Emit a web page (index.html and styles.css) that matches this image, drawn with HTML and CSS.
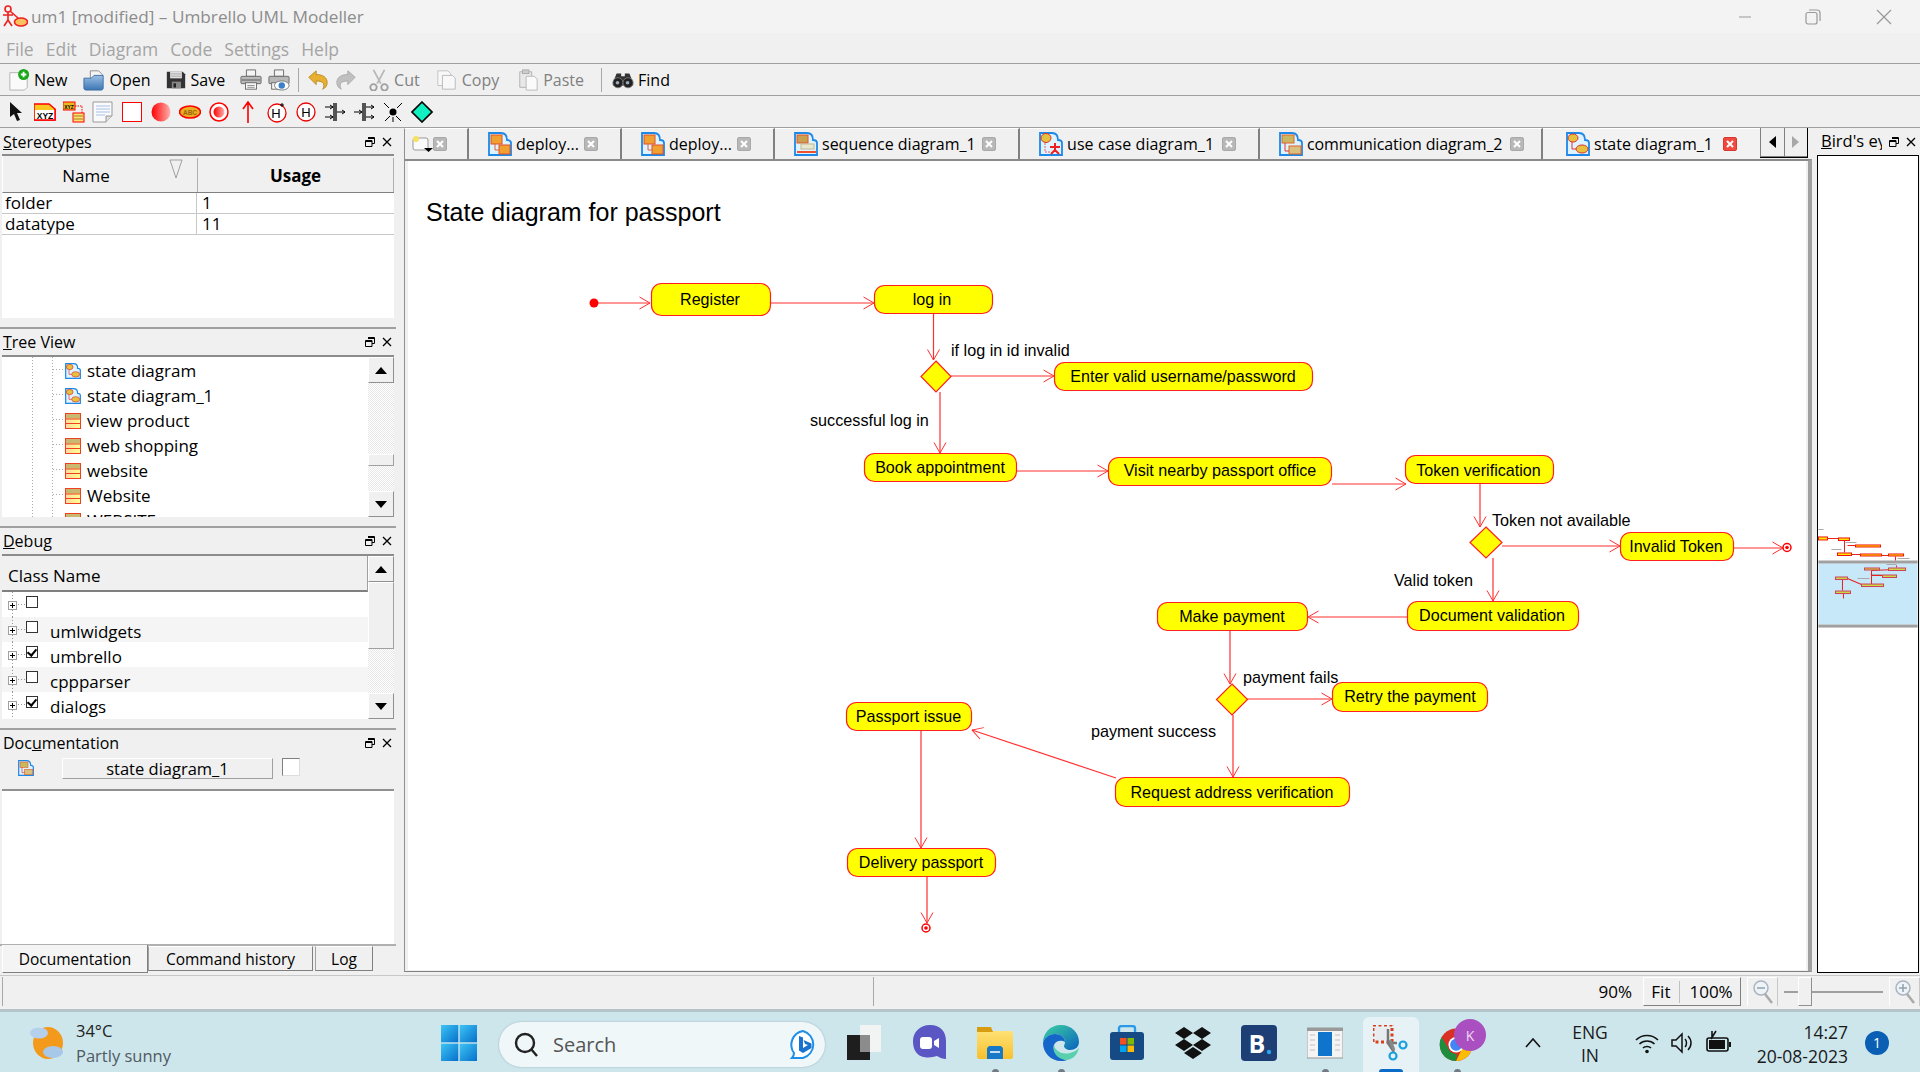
FILE: index.html
```html
<!DOCTYPE html>
<html lang="en">
<head>
<meta charset="utf-8">
<title>um1 [modified] – Umbrello UML Modeller</title>
<link rel="stylesheet" href="styles.css">
</head>
<body>
<svg class="defs" aria-hidden="true">
  <defs>
    <linearGradient id="gRed" x1="0" x2="1"><stop offset="0" stop-color="#f00"/><stop offset="1" stop-color="#ffb0b0"/></linearGradient>
    <linearGradient id="gBlue" x1="0" y1="0" x2="0" y2="1"><stop offset="0" stop-color="#9cc0e6"/><stop offset="1" stop-color="#3c76b4"/></linearGradient>
    <linearGradient id="gWin" x1="0" y1="0" x2="1" y2="1"><stop offset="0" stop-color="#3cc4f4"/><stop offset="1" stop-color="#0670cc"/></linearGradient>
    <linearGradient id="gFolder" x1="0" y1="0" x2="0" y2="1"><stop offset="0" stop-color="#ffe680"/><stop offset="1" stop-color="#f7c02c"/></linearGradient>
    <linearGradient id="gEdge" x1="0" y1="0" x2="1" y2="1"><stop offset="0" stop-color="#3cd2a0"/><stop offset="1" stop-color="#0a62c0"/></linearGradient>
    <linearGradient id="gClassFill" x1="0" x2="1"><stop offset="0" stop-color="#ffd8a0"/><stop offset="1" stop-color="#ffff90"/></linearGradient>
    <symbol id="doc" viewBox="0 0 24 24"><path d="M1 1h12c5 0 6 4 6 7 2 0 4 1 4 3v12H1z" fill="#dff2ff" stroke="#1c88e8" stroke-width="1.800"/></symbol>
    <symbol id="t-deploy" viewBox="0 0 24 24"><use href="#doc" width="24" height="24"/><rect x="3" y="3" width="11" height="9" fill="#f0a030" stroke="#e0502a"/><rect x="11" y="13" width="11" height="9" fill="#f0a030" stroke="#e0502a"/><path d="M7 12v6h4" fill="none" stroke="#e0603a"/></symbol>
    <symbol id="t-seq" viewBox="0 0 24 24"><use href="#doc" width="24" height="24"/><rect x="3" y="3" width="11" height="8" fill="#c9a050" stroke="#e0542a"/><rect x="7" y="12" width="13" height="5" fill="#e8e8d0" stroke="#c0b890"/><path d="M3 20h19" stroke="#f0502a" stroke-width="2"/></symbol>
    <symbol id="t-use" viewBox="0 0 24 24"><use href="#doc" width="24" height="24"/><ellipse cx="7" cy="6" rx="5" ry="4.500" fill="#e8c040" stroke="#d8342a"/><path d="M6 11v9h5" fill="none" stroke="#e86060" stroke-dasharray="2 1"/><path d="M16 11v9M11 15h10M16 18l-4 4M16 18l4 4" stroke="#f02020" stroke-width="2"/></symbol>
    <symbol id="t-comm" viewBox="0 0 24 24"><use href="#doc" width="24" height="24"/><rect x="3" y="3" width="12" height="8" fill="#c9b860" stroke="#e0642a"/><rect x="10" y="14" width="12" height="8" fill="#d8c080" stroke="#e0642a"/><path d="M6 11v8h4" fill="none" stroke="#e83030"/></symbol>
    <symbol id="t-state" viewBox="0 0 24 24"><use href="#doc" width="24" height="24"/><ellipse cx="7" cy="6" rx="5" ry="4" fill="#e8c040" stroke="#d8342a"/><ellipse cx="16" cy="17" rx="6" ry="4" fill="#e8c040" stroke="#d8342a"/><path d="M6 10v7h4" fill="none" stroke="#e83030"/></symbol>
    <symbol id="t-class" viewBox="0 0 16 16"><rect x=".5" y=".5" width="15" height="15" fill="url(#gClassFill)" stroke="#f04020"/><rect x="1" y="1" width="14" height="4.500" fill="#c8b870"/><path d="M1 6h14M1 10.500h14" stroke="#f04020"/></symbol>
    <symbol id="float" viewBox="0 0 10 10"><path d="M3 .5h6.500v6H7M.5 3.500H7v6H.5z" fill="none" stroke="#000"/><path d="M3 1.500h6.500M.5 4.500H7" stroke="#000"/></symbol>
    <symbol id="cross" viewBox="0 0 10 10"><path d="M1 1l8 8M9 1l-8 8" stroke="#000" stroke-width="1.300"/></symbol>
    <symbol id="tabx" viewBox="0 0 14 14"><rect x=".5" y=".5" width="13" height="13" rx="1.500" fill="#b8b8b8" stroke="#a8a8a8"/><path d="M4 4l6 6M10 4l-6 6" stroke="#fff" stroke-width="2"/></symbol>
    <symbol id="plus" viewBox="0 0 9 9"><rect x=".5" y=".5" width="8" height="8" fill="#fff" stroke="#a0a0a0"/><path d="M2 4.500h5M4.500 2v5" stroke="#000"/></symbol>
    <marker id="arr" viewBox="0 0 12 14" refX="11.500" refY="7" markerWidth="12" markerHeight="14" markerUnits="userSpaceOnUse" orient="auto"><path d="M1 1l10.500 6L1 13" fill="none" stroke="#ff3030"/></marker>
  </defs>
</svg>

<div class="app">
  <header class="titlebar">
    <svg class="appicon" viewBox="0 0 26 24"><circle cx="6" cy="4" r="3" fill="none" stroke="#ee2020" stroke-width="1.600"/><path d="M6 7v9M1 10h10M6 15l-4 6M6 15l4 6M8 6l8 7" stroke="#ee2020" stroke-width="1.600" fill="none"/><ellipse cx="19" cy="17" rx="6.500" ry="4" fill="#fbc060" stroke="#ee2020" stroke-width="1.600"/></svg>
    <span class="title-text">um1 [modified] – Umbrello UML Modeller</span>
    <span class="spacer"></span>
    <div class="winctl">
      <svg viewBox="0 0 12 16" class="wc wc-min"><path d="M0 8h12" stroke="#999"/></svg>
      <svg viewBox="0 0 16 16" class="wc wc-max"><rect x="1" y="3.500" width="11" height="11.500" rx="2" fill="none" stroke="#999" stroke-width="1.200"/><path d="M4 1h8c2 0 3 1 3 3v8" fill="none" stroke="#999" stroke-width="1.200"/></svg>
      <svg viewBox="0 0 16 16" class="wc wc-close"><path d="M1 1l14 14M15 1L1 15" stroke="#999" stroke-width="1.200"/></svg>
    </div>
  </header>

  <nav class="menubar">
    <span>File</span><span>Edit</span><span>Diagram</span><span>Code</span><span>Settings</span><span>Help</span>
  </nav>

  <div class="toolbar tb1">
    <div class="tbtn"><svg class="ti" viewBox="0 0 24 24"><path d="M2 4h14l5 5v11l-3 3H2z" fill="#fafafa" stroke="#b0b0b0"/><circle cx="17" cy="6" r="6" fill="#18a818"/><path d="M14 6h6M17 3v6" stroke="#fff" stroke-width="2"/></svg><span>New</span></div>
    <div class="tbtn"><svg class="ti" viewBox="0 0 24 24"><path d="M8 2h9l4 4v10H8z" fill="#f4f4f4" stroke="#888"/><path d="M1 10h8l3-3h10v14c0 1-1 2-2 2H3c-1 0-2-1-2-2z" fill="url(#gBlue)" stroke="#3a6ea0"/></svg><span>Open</span></div>
    <div class="tbtn"><svg class="ti ti-save" viewBox="0 0 24 24"><path d="M1 2h19l3 3v17H1z" fill="#333"/><rect x="5" y="2" width="14" height="8" fill="#e8e8e8"/><path d="M6 4h12M6 6h12M6 8h12" stroke="#aaa"/><rect x="7" y="14" width="11" height="8" fill="#888"/><rect x="9" y="16" width="3" height="5" fill="#222"/></svg><span>Save</span></div>
    <div class="tbtn tbtn-icon tbtn-first"><svg class="ti" viewBox="0 0 24 24"><path d="M7 1h10v7H7z" fill="#f4f4f4" stroke="#666"/><rect x="1" y="8" width="22" height="8" rx="1" fill="#b8b8b8" stroke="#666"/><rect x="6" y="15" width="12" height="7" fill="#f8f8f8" stroke="#666"/><path d="M8 18h8M8 20h8" stroke="#888"/><path d="M2 12h20" stroke="#555"/></svg></div>
    <div class="tbtn tbtn-icon"><svg class="ti" viewBox="0 0 24 24"><path d="M7 1h10v7H7z" fill="#f4f4f4" stroke="#666"/><rect x="1" y="8" width="22" height="8" rx="1" fill="#b8b8b8" stroke="#666"/><rect x="4" y="15" width="10" height="7" fill="#f8f8f8" stroke="#666"/><ellipse cx="15" cy="18" rx="8" ry="5" fill="#fff" stroke="#777"/><circle cx="15" cy="18" r="3.500" fill="#3a80c8"/></svg></div>
    <i class="tsep"></i>
    <div class="tbtn tbtn-icon"><svg class="ti" viewBox="0 0 24 24"><path d="M2 9l8-7v4c7 0 12 3 12 9 0 3-2 6-5 7 1-1 2-3 1-6-1-2-4-3-8-3v4z" fill="#e8b030" stroke="#b88a20"/></svg></div>
    <div class="tbtn tbtn-icon"><svg class="ti" viewBox="0 0 24 24"><path d="M22 9l-8-7v4C7 6 2 9 2 15c0 3 2 6 5 7-1-1-2-3-1-6 1-2 4-3 8-3v4z" fill="#c0c0c0" stroke="#a8a8a8"/></svg></div>
    <div class="tbtn off"><svg class="ti" viewBox="0 0 24 24"><path d="M6 1l8 15M18 1l-8 15" stroke="#b8b8b8" stroke-width="2"/><circle cx="6" cy="20" r="3.500" fill="none" stroke="#a0a0a0" stroke-width="2"/><circle cx="18" cy="20" r="3.500" fill="none" stroke="#a0a0a0" stroke-width="2"/></svg><span>Cut</span></div>
    <div class="tbtn off"><svg class="ti" viewBox="0 0 24 24"><path d="M2 2h11l3 3v13H2z" fill="#f8f8f8" stroke="#c0c0c0"/><path d="M7 7h11l3 3v12H7z" fill="#f8f8f8" stroke="#b8b8b8"/></svg><span>Copy</span></div>
    <div class="tbtn off tbtn-paste"><svg class="ti" viewBox="0 0 24 24"><path d="M3 3h13v17H3z" fill="#e8e8e8" stroke="#b0b0b0"/><rect x="6" y="1" width="7" height="4" fill="#ccc" stroke="#aaa"/><path d="M10 8h9l3 3v12H10z" fill="#fafafa" stroke="#b8b8b8"/></svg><span>Paste</span></div>
    <i class="tsep tsep2"></i>
    <div class="tbtn"><svg class="ti" viewBox="0 0 24 24"><path d="M5 5h5v3h4V5h5l4 10v3H1v-3z" fill="#333"/><circle cx="6.500" cy="15" r="5.500" fill="#222" stroke="#777"/><circle cx="17.500" cy="15" r="5.500" fill="#222" stroke="#777"/><circle cx="6" cy="15" r="2" fill="#9ab"/><circle cx="17" cy="15" r="2" fill="#9ab"/></svg><span>Find</span></div>
  </div>

  <div class="toolbar tb2">
    <div class="tool"><svg viewBox="0 0 22 22"><path d="M5 1v15l4-3 3 7 3-1-3-7h5z" fill="#111"/></svg></div>
    <div class="tool"><svg viewBox="0 0 22 22"><path d="M0 3h15l6 5v11H0z" fill="#f8c820" stroke="#f00" stroke-width="1.500"/><rect x="1" y="9" width="20" height="10" fill="#fff"/><text x="11" y="17.500" class="mini-bold">XYZ</text><path d="M0 19h21V8" fill="none" stroke="#f00" stroke-width="1.500"/></svg></div>
    <div class="tool"><svg viewBox="0 0 22 22"><rect x="0" y="1" width="12" height="8" fill="#e8b820" stroke="#f00"/><text x="6" y="7.500" class="mini-bold mini-xs">XYZ</text><rect x="10" y="12" width="11" height="9" fill="#ffe070" stroke="#f00"/><path d="M12 5h7v7" fill="none" stroke="#f00" stroke-dasharray="1.500 1"/><path d="M11 15h9M11 18h9" stroke="#a08020"/></svg></div>
    <div class="tool"><svg viewBox="0 0 22 22"><path d="M1 1h19v14l-6 6H1z" fill="#fafafa" stroke="#999"/><path d="M4 5h14M4 8h14M4 11h14M4 14h9" stroke="#a8c0e8"/><path d="M14 21v-6h6" fill="#ddd" stroke="#999"/></svg></div>
    <div class="tool"><svg viewBox="0 0 22 22"><rect x="1.500" y="1.500" width="19" height="19" fill="#fff" stroke="#f00" stroke-width="1"/></svg></div>
    <div class="tool"><svg viewBox="0 0 22 22"><circle cx="11" cy="11" r="9.500" fill="url(#gRed)"/></svg></div>
    <div class="tool"><svg viewBox="0 0 22 22"><ellipse cx="11" cy="11" rx="10.500" ry="6" fill="#e8b020" stroke="#f00" stroke-width="1.500"/><text x="11" y="13.500" class="mini-abc">ABC</text></svg></div>
    <div class="tool"><svg viewBox="0 0 22 22"><circle cx="11" cy="11" r="9" fill="#fff" stroke="#f00" stroke-width="1.500"/><circle cx="11" cy="11" r="5.500" fill="url(#gRed)"/></svg></div>
    <div class="tool"><svg viewBox="0 0 22 22"><path d="M11 22V1M6 8l5-7 5 7" fill="none" stroke="#f00" stroke-width="1.600"/></svg></div>
    <div class="tool"><svg viewBox="0 0 22 22"><circle cx="11" cy="12" r="9" fill="#fff" stroke="#e00" stroke-width="1.300"/><text x="10" y="16.500" class="mini-h">H</text><path d="M16 2v4M14 4h4" stroke="#000"/></svg></div>
    <div class="tool"><svg viewBox="0 0 22 22"><circle cx="11" cy="11" r="9" fill="#fff" stroke="#e00" stroke-width="1.300"/><text x="11" y="15.500" class="mini-h">H</text></svg></div>
    <div class="tool"><svg viewBox="0 0 22 22"><path d="M10 2v18M12 2v18" stroke="#000" stroke-width="1.300"/><path d="M1 6h8M6 4l3 2-3 2M1 16h8M6 14l3 2-3 2M13 11h8M18 9l3 2-3 2" fill="none" stroke="#000"/></svg></div>
    <div class="tool"><svg viewBox="0 0 22 22"><path d="M10 2v18M12 2v18" stroke="#000" stroke-width="1.300"/><path d="M1 11h8M6 9l3 2-3 2M13 6h8M18 4l3 2-3 2M13 16h8M18 14l3 2-3 2" fill="none" stroke="#000"/></svg></div>
    <div class="tool"><svg viewBox="0 0 22 22"><circle cx="11" cy="11" r="3.500" fill="#000"/><path d="M2 2l5 5M20 2l-5 5M3 20l5-5M19 20l-5-5M11 16v5" stroke="#000"/></svg></div>
    <div class="tool"><svg viewBox="0 0 22 22"><path d="M11 1l10 10-10 10L1 11z" fill="#10f0c0" stroke="#000" stroke-width="1.600"/></svg></div>
  </div>

  <main class="workspace">
    <aside class="left">
      <section class="dock dock-stereo">
        <div class="dock-head"><span><u>S</u>tereotypes</span><span class="dock-btns"><svg><use href="#float"/></svg><svg><use href="#cross"/></svg></span></div>
        <div class="stereo-body">
          <div class="thead">
            <div class="th th-name">Name<svg class="sort" viewBox="0 0 14 20"><path d="M1 1h12L7 19z" fill="none" stroke="#a0a0a0"/></svg></div>
            <div class="th th-usage">Usage</div>
          </div>
          <div class="trow"><span class="c1">folder</span><span class="c2">1</span></div>
          <div class="trow"><span class="c1">datatype</span><span class="c2">11</span></div>
        </div>
      </section>

      <section class="dock dock-tree">
        <div class="dock-head"><span><u>T</u>ree View</span><span class="dock-btns"><svg><use href="#float"/></svg><svg><use href="#cross"/></svg></span></div>
        <div class="tree-body">
          <div class="tree-list">
            <div class="tree-row"><svg class="ticon"><use href="#t-state"/></svg><span>state diagram</span></div>
            <div class="tree-row"><svg class="ticon"><use href="#t-state"/></svg><span>state diagram_1</span></div>
            <div class="tree-row"><svg class="ticon"><use href="#t-class"/></svg><span>view product</span></div>
            <div class="tree-row"><svg class="ticon"><use href="#t-class"/></svg><span>web shopping</span></div>
            <div class="tree-row"><svg class="ticon"><use href="#t-class"/></svg><span>website</span></div>
            <div class="tree-row"><svg class="ticon"><use href="#t-class"/></svg><span>Website</span></div>
            <div class="tree-row"><svg class="ticon"><use href="#t-class"/></svg><span>WEBSITE</span></div>
          </div>
          <div class="scroll">
            <div class="sbtn"><i class="tri-up"></i></div>
            <div class="strack st-a"></div>
            <div class="sthumb st-t1"></div>
            <div class="strack st-b"></div>
            <div class="sbtn"><i class="tri-down"></i></div>
          </div>
        </div>
      </section>

      <section class="dock dock-debug">
        <div class="dock-head"><span><u>D</u>ebug</span><span class="dock-btns"><svg><use href="#float"/></svg><svg><use href="#cross"/></svg></span></div>
        <div class="debug-body">
          <div class="debug-main">
            <div class="debug-th">Class Name</div>
            <div class="debug-rows">
              <div class="drow"><svg class="dplus"><use href="#plus"/></svg><i class="cb"></i><span></span></div>
              <div class="drow alt"><svg class="dplus"><use href="#plus"/></svg><i class="cb"></i><span>umlwidgets</span></div>
              <div class="drow"><svg class="dplus"><use href="#plus"/></svg><i class="cb on"></i><span>umbrello</span></div>
              <div class="drow alt"><svg class="dplus"><use href="#plus"/></svg><i class="cb"></i><span>cppparser</span></div>
              <div class="drow"><svg class="dplus"><use href="#plus"/></svg><i class="cb on"></i><span>dialogs</span></div>
            </div>
          </div>
          <div class="scroll">
            <div class="sbtn"><i class="tri-up"></i></div>
            <div class="sthumb st-t2"></div>
            <div class="strack st-c"></div>
            <div class="sbtn"><i class="tri-down"></i></div>
          </div>
        </div>
      </section>

      <section class="dock dock-doc">
        <div class="dock-head"><span>Doc<u>u</u>mentation</span><span class="dock-btns"><svg><use href="#float"/></svg><svg><use href="#cross"/></svg></span></div>
        <div class="doc-bar">
          <svg class="doc-ico"><use href="#t-comm"/></svg>
          <div class="doc-label">state diagram_1</div>
          <i class="doc-check"></i>
        </div>
        <div class="doc-text"></div>
        <div class="doc-tabs">
          <div class="dtab active">Documentation</div>
          <div class="dtab dtab-cmd">Command history</div>
          <div class="dtab dtab-log">Log</div>
        </div>
      </section>
    </aside>

    <section class="center">
      <div class="tabs">
        <div class="tab tab0"><svg class="corner" viewBox="0 0 22 18"><rect x="1" y="3" width="15" height="12" rx="2" fill="#fafafa" stroke="#999"/><circle cx="4" cy="4" r="3" fill="#f8e060"/><path d="M12 13h9l-4.500 4z" fill="#000"/></svg><svg class="tabx tabx0"><use href="#tabx"/></svg></div>
        <div class="tab w1"><svg class="tico"><use href="#t-deploy"/></svg><span>deploy...</span><svg class="tabx"><use href="#tabx"/></svg></div>
        <div class="tab w1"><svg class="tico"><use href="#t-deploy"/></svg><span>deploy...</span><svg class="tabx"><use href="#tabx"/></svg></div>
        <div class="tab w2"><svg class="tico"><use href="#t-seq"/></svg><span>sequence diagram_1</span><svg class="tabx"><use href="#tabx"/></svg></div>
        <div class="tab w3"><svg class="tico"><use href="#t-use"/></svg><span class="tight-up">use case diagram_1</span><svg class="tabx"><use href="#tabx"/></svg></div>
        <div class="tab w4"><svg class="tico"><use href="#t-comm"/></svg><span class="tight">communication diagram_2</span><svg class="tabx"><use href="#tabx"/></svg></div>
        <div class="tab w5 cur"><svg class="tico"><use href="#t-state"/></svg><span>state diagram_1</span>
          <svg class="tabx" viewBox="0 0 14 14"><rect x=".5" y=".5" width="13" height="13" rx="1.500" fill="#f04a40" stroke="#d83830"/><path d="M4 4l6 6M10 4l-6 6" stroke="#fff" stroke-width="2"/></svg></div>
        <div class="tabnav"><div class="navb"><i class="tri-left"></i></div><div class="navb"><i class="tri-right"></i></div></div>
      </div>
      <div class="canvas-frame">
        <svg class="diagram" viewBox="408 161 1398 809">
          <text x="426" y="221" class="d-title">State diagram for passport</text>

          <g class="edges">
            <path d="M594 303H650" marker-end="url(#arr)"/>
            <path d="M771 303H874" marker-end="url(#arr)"/>
            <path d="M933.500 314V360" marker-end="url(#arr)"/>
            <path d="M951 376H1054" marker-end="url(#arr)"/>
            <path d="M940 392V453" marker-end="url(#arr)"/>
            <path d="M1017 471H1108" marker-end="url(#arr)"/>
            <path d="M1332 484H1406" marker-end="url(#arr)"/>
            <path d="M1480 484V527" marker-end="url(#arr)"/>
            <path d="M1502 546H1620" marker-end="url(#arr)"/>
            <path d="M1734 548H1783" marker-end="url(#arr)"/>
            <path d="M1493 558V601" marker-end="url(#arr)"/>
            <path d="M1407 617H1308" marker-end="url(#arr)"/>
            <path d="M1230 631V684" marker-end="url(#arr)"/>
            <path d="M1247 699H1332" marker-end="url(#arr)"/>
            <path d="M1233 715V777" marker-end="url(#arr)"/>
            <path d="M1116 778L972 730" marker-end="url(#arr)"/>
            <path d="M921 731V848" marker-end="url(#arr)"/>
            <path d="M927 877V923" marker-end="url(#arr)"/>
          </g>

          <circle cx="594" cy="303" r="4.500" fill="#f00"/>

          <g class="nodes">
            <rect x="651.500" y="283.500" width="119" height="32" rx="10"/>
            <rect x="874.500" y="285.500" width="118" height="28" rx="10"/>
            <rect x="1054.500" y="362.500" width="258" height="28" rx="10"/>
            <rect x="864.500" y="453.500" width="152" height="28" rx="10"/>
            <rect x="1108.500" y="457.500" width="223" height="28" rx="10"/>
            <rect x="1405.500" y="455.500" width="148" height="28" rx="10"/>
            <rect x="1620.500" y="532.500" width="113" height="28" rx="10"/>
            <rect x="1407.500" y="601.500" width="171" height="29" rx="10"/>
            <rect x="1157.500" y="602.500" width="150" height="28" rx="10"/>
            <rect x="1332.500" y="682.500" width="155" height="29" rx="10"/>
            <rect x="846.500" y="702.500" width="125" height="28" rx="10"/>
            <rect x="1115.500" y="777.500" width="234" height="29" rx="10"/>
            <rect x="847.500" y="848.500" width="148" height="28" rx="10"/>
            <path d="M936 361L951 376.500 936 392 921 376.500z"/>
            <path d="M1486 527L1502 542.500 1486 558 1470 542.500z"/>
            <path d="M1232 684L1247.500 699.500 1232 715 1216.500 699.500z"/>
          </g>

          <g class="ends">
            <circle cx="1787" cy="547.500" r="4"/><circle cx="926" cy="928" r="4"/>
          </g>
          <circle cx="1787" cy="547.500" r="1.800" fill="#f00"/><circle cx="926" cy="928" r="1.800" fill="#f00"/>

          <g class="d-node-text">
            <text x="710" y="305">Register</text>
            <text x="932" y="305">log in</text>
            <text x="1183" y="381.500">Enter valid username/password</text>
            <text x="940" y="473">Book appointment</text>
            <text x="1220" y="476">Visit nearby passport office</text>
            <text x="1478.500" y="476">Token verification</text>
            <text x="1676" y="552">Invalid Token</text>
            <text x="1492" y="620.500">Document validation</text>
            <text x="1232" y="622">Make payment</text>
            <text x="1410" y="702">Retry the payment</text>
            <text x="908.500" y="721.500">Passport issue</text>
            <text x="1232" y="798">Request address verification</text>
            <text x="921" y="868">Delivery passport</text>
          </g>
          <g class="d-label">
            <text x="951" y="355.500">if log in id invalid</text>
            <text x="810" y="425.500">successful log in</text>
            <text x="1492" y="525.500">Token not available</text>
            <text x="1394" y="585.500">Valid token</text>
            <text x="1243" y="683">payment fails</text>
            <text x="1091" y="737">payment success</text>
          </g>
        </svg>
      </div>
    </section>

    <aside class="bird">
      <div class="dock-head bird-head"><span class="bird-title"><u>B</u>ird's eye view</span><span class="dock-btns"><svg><use href="#float"/></svg><svg><use href="#cross"/></svg></span></div>
      <div class="bird-body">
        <svg class="bird-map" viewBox="1819 156 99 815">
          <rect x="1819" y="563" width="99" height="61" fill="#c6e8f8"/>
          <rect x="1819" y="560" width="99" height="3" fill="#a0a0a0"/>
          <rect x="1819" y="624" width="99" height="3" fill="#a0a0a0"/>
          <path class="mini-t" d="M1819 529h5M1846 542h11M1832 549h10M1898 558h12M1887 564h10M1871 574h11M1858 578h12"/>
          <g class="mini">
            <path d="M1828 538H1839M1845 540V552M1848 545H1856M1852 554H1861M1882 555H1889M1896 556V560"/>
            <path d="M1872 570L1896 569M1872 570V584M1843 579V590M1848 578L1862 584M1872 575H1883M1897 565L1897 567M1844 593V598"/>
          </g>
          <g class="mini-n">
            <rect x="1819" y="536.500" width="9" height="3"/><rect x="1839" y="537.500" width="11" height="2.500"/><rect x="1856" y="544.500" width="25" height="2"/><rect x="1838" y="552.500" width="14" height="2.500"/><rect x="1861" y="553.500" width="21" height="2"/><rect x="1889" y="553.500" width="15" height="2"/>
          </g>
          <g class="mini-m">
            <rect x="1865" y="567.500" width="15" height="2"/><rect x="1889" y="567.500" width="17" height="2.500"/><rect x="1883" y="574.500" width="14" height="2.500"/><rect x="1836" y="576.500" width="12" height="2.500"/><rect x="1862" y="583.500" width="22" height="2.500"/><rect x="1836" y="590.500" width="15" height="2.500"/>
          </g>
        </svg>
      </div>
    </aside>
  </main>

  <footer class="status">
    <div class="status-left"></div>
    <div class="status-right">
      <span class="zoomval">90%</span>
      <div class="zoomgroup"><span>Fit</span><i></i><span>100%</span></div>
      <div class="zbtn"><svg viewBox="0 0 22 26"><circle cx="9" cy="9" r="7" fill="#eef3f8" stroke="#a8b4c0" stroke-width="1.500"/><path d="M5 9h8" stroke="#90a0b0" stroke-width="1.500"/><path d="M13 15l7 9" stroke="#aaa" stroke-width="2.500"/></svg></div>
      <div class="zslider"><i class="zline"></i><i class="zthumb"></i></div>
      <div class="zbtn"><svg viewBox="0 0 22 26"><circle cx="9" cy="9" r="7" fill="#eef3f8" stroke="#a8b4c0" stroke-width="1.500"/><path d="M5 9h8M9 5v8" stroke="#90a0b0" stroke-width="1.500"/><path d="M13 15l7 9" stroke="#aaa" stroke-width="2.500"/></svg></div>
    </div>
  </footer>

  <footer class="taskbar">
    <div class="weather">
      <svg class="weather-ico" viewBox="0 0 36 34"><ellipse cx="19" cy="17" rx="15" ry="16" fill="#f39a1c"/><ellipse cx="10" cy="7" rx="9" ry="5.500" fill="#b4d0ec"/><ellipse cx="24" cy="26" rx="10" ry="6" fill="#a8c8ea"/></svg>
      <div class="weather-text"><div class="wt1">34°C</div><div class="wt2">Partly sunny</div></div>
    </div>
    <div class="slot"><svg class="ico" viewBox="0 0 36 36"><rect x="0" y="0" width="17.300" height="17.300" fill="url(#gWin)"/><rect x="18.700" y="0" width="17.300" height="17.300" fill="url(#gWin)"/><rect x="0" y="18.700" width="17.300" height="17.300" fill="url(#gWin)"/><rect x="18.700" y="18.700" width="17.300" height="17.300" fill="url(#gWin)"/></svg></div>
    <div class="search">
      <svg class="s-ico" viewBox="0 0 24 26"><circle cx="11" cy="11" r="9" fill="none" stroke="#222" stroke-width="2.400"/><path d="M17 17l6 7" stroke="#222" stroke-width="2.400"/></svg>
      <span class="s-text">Search</span>
      <svg class="s-bing" viewBox="0 0 32 32"><path d="M16 2a14 14 0 0 1 0 27H5c0 0 2-2 2-5A14 14 0 0 1 16 2z" fill="#fff" stroke="#1d8fe8" stroke-width="2"/><path d="M12 7l4 1.500V19l5-3-3-1-1.500-4 8 3.500V19l-8.500 5-4-2.500z" fill="#1872d0"/></svg>
    </div>
    <div class="slot"><svg class="ico" viewBox="0 0 36 36"><rect x="15" y="0" width="21" height="27" fill="#f2f4f4"/><rect x="2" y="10" width="23" height="25" fill="#1e1e1e"/><rect x="15" y="10" width="10" height="17" fill="#8c8c8c"/></svg></div>
    <div class="slot"><svg class="ico" viewBox="0 0 36 36"><path d="M18 0c11 0 16 7 16 16v18c-3 0-6-1-9-3-9 3-24 3-24-15C1 7 8 0 18 0z" transform="translate(1 0)" fill="#5a56c4"/><rect x="9" y="12" width="12" height="12" rx="3" fill="#fff"/><path d="M23 16l5-3v10l-5-3z" fill="#fff"/></svg></div>
    <div class="slot dot"><svg class="ico" viewBox="0 0 36 32"><path d="M0 2c0-1 1-2 2-2h10l4 4h18c1 0 2 1 2 2v24c0 1-1 2-2 2H2c-1 0-2-1-2-2z" fill="url(#gFolder)"/><path d="M0 0h14l2 5H0z" fill="#d89c10"/><path d="M10 22c0-1 1-3 3-3h10c2 0 3 2 3 3v10H10z" fill="#1878c8"/><path d="M13 25h10" stroke="#fff" stroke-width="1.500"/></svg></div>
    <div class="slot dot"><svg class="ico" viewBox="0 0 36 36"><path d="M18 0c11 0 18 8 18 17 0 5-4 8-9 8-3 0-6-2-6-4 0-1 1-2 1-4 0-5-5-8-10-8C6 9 1 13 0 18 0 8 7 0 18 0z" fill="url(#gEdge)"/><path d="M0 18c1-5 6-9 12-9 5 0 10 3 10 8-3-2-9-2-11 3-2 6 3 14 13 15-2 1-4 1-6 1C8 36 0 28 0 18z" fill="#1466c8"/><path d="M36 22c-1 8-7 13-13 13-9-1-14-9-12-15 1 6 8 10 16 8 4-1 8-3 9-6z" fill="#58d0ae"/></svg></div>
    <div class="slot"><svg class="ico" viewBox="0 0 36 36"><path d="M10 8V3c0-1 1-2 3-2h10c2 0 3 1 3 2v5" fill="none" stroke="#2a9ae8" stroke-width="2.400"/><rect x="1" y="7" width="34" height="28" rx="3" fill="#154a84"/><rect x="11" y="13" width="6.500" height="6.500" fill="#f25022"/><rect x="18.500" y="13" width="6.500" height="6.500" fill="#7fba00"/><rect x="11" y="20.500" width="6.500" height="6.500" fill="#00a4ef"/><rect x="18.500" y="20.500" width="6.500" height="6.500" fill="#ffb900"/></svg></div>
    <div class="slot"><svg class="ico" viewBox="0 0 36 32"><path d="M9 0l9 6-9 6-9-6zM27 0l9 6-9 6-9-6zM9 12l9 6-9 6-9-6zM27 12l9 6-9 6-9-6zM18 20l9 6-9 6-9-6z" fill="#111"/></svg></div>
    <div class="slot"><svg class="ico" viewBox="0 0 36 36"><rect x="0" y="0" width="36" height="36" rx="4" fill="#1d3f75"/><text x="16" y="28" class="booking">B</text><circle cx="28" cy="27" r="2.200" fill="#27a6e8"/></svg></div>
    <div class="slot dot"><svg class="ico" viewBox="0 0 36 30"><rect x="0" y="0" width="36" height="30" fill="#f4f4f4" stroke="#999"/><rect x="0" y="0" width="36" height="3" fill="#999"/><rect x="11" y="4" width="14" height="24" fill="#0f74cc"/><path d="M3 7h5M3 12h5M3 17h5M3 22h5M28 7h5M28 12h5M28 17h5M28 22h5" stroke="#c0c0c0"/></svg></div>
    <div class="slot active"><svg class="ico" viewBox="0 0 36 36"><rect x="0" y="0" width="19" height="17" fill="none" stroke="#d8401c" stroke-width="3" stroke-dasharray="3 2.500"/><rect x="3" y="3" width="13" height="12" fill="#e8ecef"/><path d="M15 4v14l6 9M24 18l-9 0" stroke="#777" stroke-width="2.500" fill="none"/><path d="M17 15l4 10" stroke="#888" stroke-width="3"/><circle cx="30" cy="20" r="3.500" fill="none" stroke="#1aa0e0" stroke-width="2.200"/><circle cx="20" cy="31" r="3.500" fill="none" stroke="#1aa0e0" stroke-width="2.200"/></svg></div>
    <div class="slot dot chrome">
      <svg class="ico" viewBox="0 0 40 42"><circle cx="19" cy="23" r="19" fill="#d93025"/><path d="M19 42A19 19 0 0 1 2 14l10 17c3 2 6 3 8 3z" fill="#1e8e3e"/><path d="M19 42c10 0 19-8 19-19 0-3-1-6-2-8H19l9 8z" fill="#fbbc04"/><circle cx="19" cy="23" r="9" fill="#fff"/><circle cx="19" cy="23" r="7" fill="#4285f4"/></svg>
      <span class="kbadge">K</span>
    </div>
    <div class="tray">
      <svg class="caret" viewBox="0 0 16 10"><path d="M1 9l7-8 7 8" fill="none" stroke="#111" stroke-width="1.600"/></svg>
      <div class="lang"><div>ENG</div><div>IN</div></div>
      <svg class="tr-wifi" viewBox="0 0 24 24"><path d="M1 9c6-6 16-6 22 0M4.500 13c4-4 11-4 15 0M8 17c2-2 6-2 8 0" fill="none" stroke="#111" stroke-width="1.600"/><circle cx="12" cy="20.500" r="1.800" fill="#111"/></svg>
      <svg class="tr-vol" viewBox="0 0 24 24"><path d="M2 9h4l6-6v18l-6-6H2z" fill="none" stroke="#111" stroke-width="1.500"/><path d="M15 8c2 2 2 6 0 8M18 5c4 4 4 10 0 14" fill="none" stroke="#111" stroke-width="1.500"/></svg>
      <svg class="tr-bat" viewBox="0 0 26 26"><rect x="1" y="8" width="21" height="13" rx="2" fill="none" stroke="#111" stroke-width="1.600"/><rect x="3" y="10" width="16" height="9" fill="#111"/><rect x="23" y="12" width="2" height="5" fill="#111"/><path d="M6 1v7M10 1L5 9" stroke="#111" stroke-width="1.600"/></svg>
      <div class="clock"><div>14:27</div><div>20-08-2023</div></div>
      <span class="notif">1</span>
    </div>
  </footer>
</div>
</body>
</html>
```
FILE: styles.css
```css
* { box-sizing: border-box; }
html, body { margin: 0; padding: 0; }
body { width: 1920px; height: 1072px; overflow: hidden; background: #f0f0f0; font-family: "Open Sans", "Noto Sans", sans-serif; color: #000; }
.defs { display: block; width: 0; height: 0; }
i { display: block; font-style: normal; }
.app { display: flex; flex-direction: column; width: 1920px; height: 1072px; }

/* title bar */
.titlebar { flex: 0 0 33px; display: flex; align-items: center; background: #f3f3f3; padding-left: 2px; }
.appicon { width: 26px; height: 24px; margin-right: 3px; }
.title-text { font-size: 17.200px; color: #8c8c8c; }
.spacer { flex: 1; }
.winctl { display: flex; align-items: center; }
.wc { height: 16px; display: block; }
.wc-min { width: 12px; margin-right: 54px; }
.wc-max { width: 16px; margin-right: 55px; }
.wc-close { width: 16px; margin-right: 28px; }

/* menu */
.menubar { flex: 0 0 31px; display: flex; align-items: center; gap: 12px; padding: 2px 6px 0; border-bottom: 1px solid #a0a0a0; font-size: 17.500px; color: #a4a4a4; background: #f0f0f0; }

/* toolbars */
.toolbar { flex: 0 0 32px; display: flex; align-items: center; border-bottom: 1px solid #a0a0a0; background: #f0f0f0; }
.tb1 { font-size: 16px; }
.tbtn { display: flex; align-items: center; gap: 4px; padding: 0 8px; }
.tbtn span { white-space: nowrap; }
.tbtn-icon { padding: 0 3px; }
.tbtn-first { margin-left: 4px; }
.tbtn-paste { margin-left: 2px; }
.ti { width: 22px; height: 22px; display: block; }
.ti-save { width: 20px; }
.off { color: #808080; }
.tsep { width: 1px; height: 24px; background: #a8a8a8; margin: 0 5px; }
.tsep2 { margin: 0 2px 0 9px; }
.tb2 { padding-left: 1px; }
.tool { width: 29px; height: 30px; display: flex; align-items: center; justify-content: center; }
.tool svg { width: 22px; height: 22px; display: block; }
.mini-bold { font: 700 8.500px "Liberation Sans", sans-serif; text-anchor: middle; fill: #000; }
.mini-xs { font-size: 5px; }
.mini-abc { font: 700 6.500px "Liberation Sans", sans-serif; text-anchor: middle; fill: #a06010; }
.mini-h { font: 400 13px "Liberation Sans", sans-serif; text-anchor: middle; fill: #000; }

/* workspace */
.workspace { flex: 0 0 847px; display: flex; min-height: 0; }
.left { flex: 0 0 396px; display: flex; flex-direction: column; }
.dock { display: flex; flex-direction: column; overflow: hidden; }
.dock-stereo { flex: 0 0 199px; }
.dock-tree { flex: 0 0 199px; border-top: 2px solid #a0a0a0; }
.dock-debug { flex: 0 0 202px; border-top: 2px solid #a0a0a0; }
.dock-doc { flex: 1; border-top: 2px solid #a0a0a0; }
.dock-head { flex: 0 0 26px; display: flex; align-items: center; justify-content: space-between; padding: 0 2px 1px 3px; font-size: 16px; line-height: 1; white-space: nowrap; }
.dock-stereo .dock-head { padding: 1px 2px 0 3px; }
.dock-btns { display: flex; gap: 7px; align-items: center; padding-right: 2px; }
.dock-btns svg { width: 10px; height: 10px; display: block; }

.stereo-body { flex: 1; margin: 0 2px 9px; background: #fff; border-top: 2px solid #8c8c8c; }
.thead { display: flex; height: 37px; padding-top: 2px; background: #f0f0f0; border-bottom: 1px solid #808080; border-left: 1px solid #fff; }
.th { position: relative; display: flex; align-items: center; justify-content: center; font-size: 17px; border-right: 1px solid #b0b0b0; }
.th-name { width: 195px; padding-right: 28px; }
.th-usage { flex: 1; font-weight: 700; }
.sort { position: absolute; left: 166px; top: 1px; width: 14px; height: 20px; }
.trow { display: flex; height: 21px; font-size: 17px; line-height: 20px; border-bottom: 1px solid #c8c8c8; }
.c1 { width: 195px; padding-left: 3px; border-right: 1px solid #c8c8c8; }
.c2 { padding-left: 5px; }

.tree-body { flex: 1; display: flex; margin: 0 2px 9px; border-top: 2px solid #8c8c8c; background: #fff; min-height: 0; }
.tree-list { flex: 1; padding-top: 1px; overflow: hidden; background-color: #fff; background-image: repeating-linear-gradient(#aaa 0 1px, transparent 1px 3px), repeating-linear-gradient(#aaa 0 1px, transparent 1px 3px); background-size: 1px 100%, 1px 100%; background-position: 30px 0, 50px 0; background-repeat: no-repeat; }
.tree-row { display: flex; align-items: center; height: 25px; padding-left: 63px; font-size: 17px; white-space: nowrap; background-image: repeating-linear-gradient(90deg, #aaa 0 1px, transparent 1px 3px); background-size: 10px 1px; background-position: 51px 11px; background-repeat: no-repeat; }
.ticon { width: 16px; height: 16px; margin-right: 6px; flex: none; }
.scroll { flex: 0 0 26px; display: flex; flex-direction: column; background: #f0f0f0; }
.sbtn { flex: 0 0 26px; display: flex; align-items: center; justify-content: center; background: #f0f0f0; border: 1px solid; border-color: #fff #909090 #909090 #fff; }
.strack { background-color: #f6f6f6; background-image: repeating-conic-gradient(#e8e8e8 0 25%, #fff 0 50%); background-size: 2px 2px; }
.st-a { flex: 0 0 71px; }
.sthumb { background: #f0f0f0; border: 1px solid; border-color: #fff #a0a0a0 #a0a0a0 #fff; }
.st-t1 { flex: 0 0 12px; }
.st-b { flex: 1; }
.st-t2 { flex: 0 0 67px; }
.st-c { flex: 1; }
.tri-up { width: 0; height: 0; border: 6.500px solid transparent; border-top: 0; border-bottom: 7px solid #000; }
.tri-down { width: 0; height: 0; border: 6.500px solid transparent; border-bottom: 0; border-top: 7px solid #000; }
.tri-left { width: 0; height: 0; border: 6.500px solid transparent; border-left: 0; border-right: 7px solid #000; }
.tri-right { width: 0; height: 0; border: 6.500px solid transparent; border-right: 0; border-left: 7px solid #a8a8a8; }

.debug-body { flex: 1; display: flex; margin: 0 2px 9px; border-top: 2px solid #8c8c8c; min-height: 0; }
.debug-main { flex: 1; display: flex; flex-direction: column; min-width: 0; }
.debug-th { flex: 0 0 36px; display: flex; align-items: center; padding: 5px 0 0 6px; font-size: 17px; border-bottom: 2px solid #808080; border-right: 1px solid #a0a0a0; }
.debug-rows { flex: 1; background-color: #fff; }
.drow { position: relative; height: 25px; display: flex; align-items: flex-start; font-size: 17px; background-color: #fff; background-image: repeating-linear-gradient(#999 0 1px, transparent 1px 3px), repeating-linear-gradient(90deg, #999 0 1px, transparent 1px 3px); background-size: 1px 100%, 8px 1px; background-position: 10px 0, 16px 12px; background-repeat: no-repeat; }
.drow.alt { background-color: #f5f5f5; }
.dplus { width: 9px; height: 9px; margin: 9px 0 0 6px; flex: none; }
.cb { width: 12px; height: 12px; margin: 4px 0 0 9px; border: 1px solid #333; background: #fff; flex: none; position: relative; }
.cb.on::after { content: ""; position: absolute; left: 2px; top: 0; width: 4px; height: 7px; border: solid #000; border-width: 0 2px 2px 0; transform: rotate(40deg); }
.drow span { margin-left: 12px; line-height: 25px; margin-top: 2px; }

.doc-bar { flex: 0 0 35px; display: flex; align-items: flex-start; padding-top: 2px; border-bottom: 2px solid #909090; margin: 0 2px; }
.doc-ico { width: 16px; height: 16px; margin: 2px 0 0 16px; flex: none; }
.doc-label { width: 211px; height: 21px; margin-left: 28px; text-align: center; font-size: 16.500px; line-height: 20px; border: 1px solid; border-color: #fff #a0a0a0 #a0a0a0 #fff; }
.doc-check { width: 18px; height: 18px; margin: 0 0 0 9px; background: #fff; border: 1px solid #808080; border-right-color: #ddd; border-bottom-color: #ddd; }
.doc-text { flex: 1; background: #fff; margin: 0 2px; }
.doc-tabs { flex: 0 0 31px; display: flex; align-items: flex-start; border-top: 2px solid #b0b0b0; padding-left: 2px; font-size: 15.500px; }
.dtab { height: 25px; display: flex; align-items: center; justify-content: center; border: 1px solid; border-color: #fff #808080 #808080 #a0a0a0; background: #f0f0f0; }
.dtab.active { width: 146px; height: 28px; border-top: none; background: #f4f4f4; margin-top: -1px; border-left-color: #fff; }
.dtab-cmd { width: 165px; margin-top: 0; }
.dtab-log { width: 58px; margin-left: 2px; }

/* center */
.center { flex: 0 0 1408px; margin-left: 8px; width: 1408px; display: flex; flex-direction: column; padding-bottom: 3px; }
.tabs { flex: 0 0 31px; display: flex; }
.tab { display: flex; align-items: center; height: 31px; border-right: 2px solid #808080; border-top: 1px solid #fff; font-size: 16px; white-space: nowrap; background: #f0f0f0; }
.tab0 { width: 65px; padding-left: 7px; border-left: 1px solid #909090; position: relative; }
.corner { width: 22px; height: 18px; flex: none; }
.tabx { width: 14px; height: 14px; flex: none; margin-left: auto; margin-right: 22px; }
.tabx0 { margin: 0 0 0 -1px; }
.tab span { margin-left: 4px; }
.tab span.tight { letter-spacing: -0.130px; }
.tab span.tight-up { letter-spacing: 0.080px; }
.tico { width: 24px; height: 24px; flex: none; margin-left: 19px; }
.w1 { width: 153px; }
.w2 { width: 245px; }
.w3 { width: 240px; }
.w4 { width: 283px; }
.w4 .tabx { margin-right: 17px; }
.w5 { width: 217px; border-right: none; background: #f2f2f2; }
.w5 .tico { margin-left: 23px; }
.w5 .tabx { margin-right: 23px; }
.tabnav { display: flex; width: 48px; height: 30px; border-bottom: 1px solid #000; border-right: 1px solid #000; }
.navb { flex: 1; display: flex; align-items: center; justify-content: center; border-left: 1px solid #808080; border-bottom: 1px solid #808080; background: #f0f0f0; }
.canvas-frame { flex: 1; display: flex; border-top: 2px solid #8a8a8a; border-left: 1px solid #909090; border-right: 4px solid #a0a0a0; border-bottom: 1px solid #808080; padding: 0 0 1px 3px; min-height: 0; width: 1408px; background: #f0f0f0; }
.diagram { display: block; width: 1398px; height: 809px; background: #fff; flex: none; }
.d-title { font: 400 25px "Liberation Sans", Arial, sans-serif; fill: #000; }
.edges path { fill: none; stroke: #ff3030; stroke-width: 1.200; }
.nodes rect, .nodes path { fill: #ffff00; stroke: #ff2020; stroke-width: 1.200; }
.ends circle { fill: #fff; stroke: #f00; stroke-width: 1.500; }
.d-node-text text { font: 400 16.100px "Liberation Sans", Arial, sans-serif; text-anchor: middle; fill: #000; }
.d-label text { font: 400 16.200px "Liberation Sans", Arial, sans-serif; fill: #000; }

/* bird */
.bird { flex: 0 0 104px; margin-left: 4px; display: flex; flex-direction: column; min-width: 0; }
.bird-head { flex: 0 0 27px; padding: 0 2px 0 5px; font-size: 16.500px; }
.bird-title { width: 61px; overflow: hidden; }
.bird-body { flex: 1; margin: 0 1px 2px 1px; border: 1px solid #000; background: #fff; min-height: 0; }
.bird-map { display: block; width: 100%; height: 100%; }
.mini path { fill: none; stroke: #e82020; stroke-width: 1; }
.mini-t { fill: none; stroke: #aaa; stroke-width: 1; }
.mini-n rect { fill: #ffee00; stroke: #f01010; stroke-width: 1; }
.mini-m rect { fill: #c8d840; stroke: #d04060; stroke-width: 1; }

/* status */
.status { flex: 0 0 33px; display: flex; justify-content: space-between; padding: 1px 0 3px 2px; border-top: 1px solid #c8c8c8; background: #f0f0f0; font-size: 17px; }
.status-left { width: 872px; border-left: 1px solid #a8a8a8; border-right: 1px solid #a8a8a8; }
.status-right { display: flex; align-items: center; }
.zoomval { margin-right: 11px; }
.zoomgroup { display: flex; align-items: center; height: 29px; width: 98px; justify-content: center; gap: 9px; border: 1px solid; border-color: #fff #808080 #808080 #fff; }
.zoomgroup i { width: 1px; height: 22px; background: #c0c0c0; }
.zbtn { width: 31px; height: 29px; display: flex; align-items: center; justify-content: center; margin-left: 6px; border-left: 1px solid #fff; border-top: 1px solid #fff; border-right: 1px solid #c8c8c8; }
.zbtn svg { width: 22px; height: 26px; display: block; }
.zslider { position: relative; width: 99px; height: 29px; margin-left: 6px; }
.zline { position: absolute; left: 0; right: 0; top: 14px; height: 2px; background: #a0a0a0; }
.zthumb { position: absolute; left: 14px; top: 0; width: 14px; height: 29px; background: #f0f0f0; border: 1px solid; border-color: #fff #909090 #909090 #fff; }

/* taskbar */
.taskbar { flex: 0 0 64px; display: flex; align-items: stretch; background: #cde6ec; border-top: 3px solid #b4c4c8; color: #1a1a1a; }
.weather { flex: 0 0 426px; display: flex; align-items: center; padding: 1px 0 0 29px; }
.weather-ico { width: 36px; height: 34px; flex: none; }
.weather-text { margin-left: 11px; font-size: 16.500px; line-height: 25px; }
.wt1 { color: #222; }
.wt2 { color: #505a60; }
.slot { flex: 0 0 66px; position: relative; display: flex; align-items: center; justify-content: center; }
.ico { width: 36px; height: 36px; display: block; }
.slot.dot::after { content: ""; position: absolute; left: 30px; bottom: 0; width: 7px; height: 4px; border-radius: 4px 4px 0 0; background: #707a80; }
.slot.active::before { content: ""; position: absolute; left: 5px; right: 5px; top: 5px; bottom: 0; background: #e6f2f6; border-radius: 6px 6px 0 0; }
.slot.active::after { content: ""; position: absolute; left: 21px; bottom: 0; width: 24px; height: 4px; border-radius: 3px 3px 0 0; background: #0a6cc8; }
.slot.active .ico { position: relative; z-index: 1; }
.kbadge { position: absolute; left: 30px; top: 7px; width: 32px; height: 32px; border-radius: 50%; background: #a94fc0; color: #eedcf4; font-size: 14px; display: flex; align-items: center; justify-content: center; }
.search { flex: 0 0 326px; margin: 10px 5px 4px 7px; height: 45px; display: flex; align-items: center; padding: 0 6px 0 15px; border-radius: 23px; background: #eff7f9; box-shadow: 0 0 2px #9ab; }
.s-ico { width: 24px; height: 26px; flex: none; }
.s-text { margin-left: 15px; flex: 1; font-size: 20px; color: #555; }
.s-bing { width: 32px; height: 32px; flex: none; }
.tray { flex: 1; display: flex; align-items: center; position: relative; }
.caret { width: 16px; height: 10px; margin-left: 35px; }
.lang { margin-left: 26px; width: 46px; padding-top: 2px; text-align: center; font-size: 17.500px; line-height: 23px; }
.tr-wifi { width: 24px; height: 24px; margin-left: 22px; }
.tr-vol { width: 24px; height: 24px; margin-left: 11px; }
.tr-bat { width: 26px; height: 26px; margin-left: 12px; }
.clock { flex: 0 0 auto; margin-left: auto; margin-right: 17px; padding-top: 2px; text-align: right; font-size: 17.500px; line-height: 24px; }
.notif { width: 24px; height: 24px; margin-right: 31px; border-radius: 50%; background: #0a5fb4; color: #fff; font-size: 14px; display: flex; align-items: center; justify-content: center; }
.booking { font: 700 25px "Open Sans", sans-serif; fill: #fff; text-anchor: middle; }
```
